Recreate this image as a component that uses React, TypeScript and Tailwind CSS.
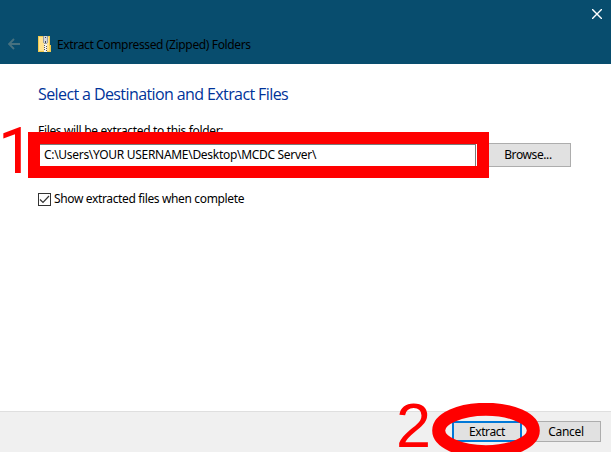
const buttonBase =
  "flex items-center justify-center bg-[#e1e1e1] text-[12px] leading-none text-black";

function ZipFolderIcon() {
  return (
    <svg width="14" height="16" viewBox="0 0 14 16" shapeRendering="crispEdges">
      <path d="M0 0h12v9h1v7H0z" fill="#efc94f" />
      <path d="M1 1h10v14H1z" fill="#ffe391" />
      <path d="M11 10h1v5h-1z" fill="#fbd65c" />
      <path d="M5 0h5v7H9v1H6V7H5z" fill="#9a9da3" />
      <path d="M6 0h3v7H6z" fill="#d4d7dc" />
      <path d="M7 1h1v1H7zM7 5h1v2H7z" fill="#42464d" />
      <path d="M6 8h3v8H6z" fill="#f4f4f4" />
      <path d="M6 9h1v1H6zM8 10h1v1H8zM6 11h1v1H6zM8 12h1v1H8zM6 13h1v1H6zM8 14h1v1H8z" fill="#555" />
    </svg>
  );
}

export default function App() {
  return (
    <div className="relative flex h-[452px] w-[611px] flex-col overflow-hidden bg-white font-['Noto_Sans','Open_Sans',sans-serif] text-[12px] text-black">
      <header className="flex h-16 flex-col bg-[#084d6e]">
        <div className="flex h-7 justify-end pr-[9px] pt-[9px]">
          <svg width="10" height="10" viewBox="0 0 10 10" stroke="#fff" strokeWidth="1.4">
            <path d="M0 0L10 10M10 0L0 10" />
          </svg>
        </div>
        <div className="flex h-8 items-center pl-2">
          <svg width="12" height="12" viewBox="0 0 12 12" fill="none" stroke="#47717f" strokeWidth="1.9">
            <path d="M12 6H1M6 1L1 6l5 5" />
          </svg>
          <div className="ml-[18px]">
            <ZipFolderIcon />
          </div>
          <span className="ml-[5px] mt-[2px] whitespace-nowrap leading-4 tracking-[-0.36px]">
            Extract Compressed (Zipped) Folders
          </span>
        </div>
      </header>

      <main className="flex flex-1 flex-col pl-[38px] pt-5">
        <h1 className="-mt-px h-[22px] whitespace-nowrap font-['Open_Sans','Noto_Sans',sans-serif] text-[16px] leading-[22px] tracking-[-0.6px] text-[#003399]">
          Select a Destination and Extract Files
        </h1>
        <p className="mt-[18px] h-4 whitespace-nowrap leading-4 tracking-[-0.34px]">
          Files will be extracted to this folder:
        </p>
        <div className="mt-1 flex h-6 items-center">
          <div className="mt-px flex h-[23px] w-[438px] items-center border border-[#7a7a7a] pb-[2px] pl-[5px]">
            <span className="whitespace-nowrap tracking-[-0.3px]">C:\Users\YOUR USERNAME\Desktop\MCDC Server\</span>
          </div>
          <button className={buttonBase + " ml-2 h-6 w-[87px] border border-[#adadad] pl-px tracking-[-0.4px]"}>Browse...</button>
        </div>
        <label className="mt-6 flex h-4 items-center">
          <span className="flex size-[13px] items-center justify-center border border-[#333]">
            <svg width="11" height="11" viewBox="0 0 11 11" fill="none" stroke="#333" strokeWidth="1.2">
              <path d="M1 5.5L4 8.5L10 2" />
            </svg>
          </span>
          <span className="ml-[3px] whitespace-nowrap leading-4 tracking-[-0.36px]">Show extracted files when complete</span>
        </label>
      </main>

      <footer className="flex h-[41px] justify-end gap-[9px] border-t border-[#dfdfdf] bg-[#f0f0f0] pr-[10px] pt-[9px]">
        <button className={buttonBase + " h-[21px] w-[70px] border-2 border-[#0078d7] tracking-[-0.4px]"}>Extract</button>
        <button className={buttonBase + " h-[21px] w-[70px] border border-[#adadad] tracking-[-0.3px]"}>Cancel</button>
      </footer>

      <div className="absolute left-[28px] top-[132px] h-[46px] w-[461px] border-12 border-[#f00]" />
      <span className="absolute left-[-2px] top-[120px] font-[Roboto,sans-serif] text-[64px] leading-[64px] text-[#f00]">1</span>
      <span className="absolute left-[396px] top-[396px] font-['Liberation_Sans',sans-serif] text-[63px] leading-[59px] text-[#f00]">2</span>
      <svg className="absolute left-[432px] top-[403px]" width="108" height="49" viewBox="0 0 108 49">
        <ellipse cx="54" cy="27.5" rx="47.3" ry="21.2" fill="none" stroke="#f00" strokeWidth="13" />
      </svg>
    </div>
  );
}
